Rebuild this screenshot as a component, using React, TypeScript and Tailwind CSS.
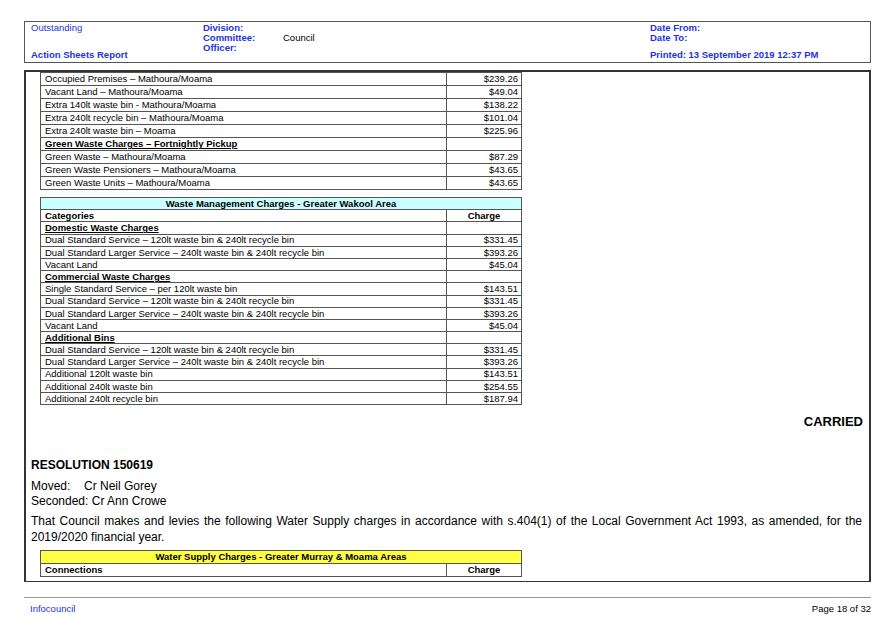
const F = { fontFamily: '"Liberation Sans Narrow","Liberation Sans",Arial,sans-serif' };

const t1: [string, string, boolean?][] = [
  ["Occupied Premises – Mathoura/Moama", "$239.26"],
  ["Vacant Land – Mathoura/Moama", "$49.04"],
  ["Extra 140lt waste bin - Mathoura/Moama", "$138.22"],
  ["Extra 240lt recycle bin – Mathoura/Moama", "$101.04"],
  ["Extra 240lt waste bin – Moama", "$225.96"],
  ["Green Waste Charges – Fortnightly Pickup", "", true],
  ["Green Waste – Mathoura/Moama", "$87.29"],
  ["Green Waste Pensioners – Mathoura/Moama", "$43.65"],
  ["Green Waste Units – Mathoura/Moama", "$43.65"],
];
const t2: [string, string, boolean?][] = [
  ["Domestic Waste Charges", "", true],
  ["Dual Standard Service – 120lt waste bin & 240lt recycle bin", "$331.45"],
  ["Dual Standard Larger Service – 240lt waste bin & 240lt recycle bin", "$393.26"],
  ["Vacant Land", "$45.04"],
  ["Commercial Waste Charges", "", true],
  ["Single Standard Service – per 120lt waste bin", "$143.51"],
  ["Dual Standard Service – 120lt waste bin & 240lt recycle bin", "$331.45"],
  ["Dual Standard Larger Service – 240lt waste bin & 240lt recycle bin", "$393.26"],
  ["Vacant Land", "$45.04"],
  ["Additional Bins", "", true],
  ["Dual Standard Service – 120lt waste bin & 240lt recycle bin", "$331.45"],
  ["Dual Standard Larger Service – 240lt waste bin & 240lt recycle bin", "$393.26"],
  ["Additional 120lt waste bin", "$143.51"],
  ["Additional 240lt waste bin", "$254.55"],
  ["Additional 240lt recycle bin", "$187.94"],
];

function Row({ r, h }: { r: [string, string, boolean?]; h: string }) {
  return (
    <tr className={h}>
      <td className={`border border-[#555] px-[4px] leading-none ${r[2] ? "font-bold underline" : ""}`}>{r[0]}</td>
      <td className="border border-[#555] px-[3px] text-right leading-none">{r[1]}</td>
    </tr>
  );
}

export default function App() {
  return (
    <div className="w-[893px] h-[626px] bg-white relative text-black overflow-hidden" style={F}>
      <div className="pt-[21px] pl-[24px] w-[871px]">
        <div className="border border-[#555] h-[42px] flex text-[9.5px] text-[#2233dd] px-[6px] pt-[1px] leading-[10px]">
          <div className="w-[172px] flex flex-col justify-between pb-[2px]">
            <div>Outstanding</div>
            <div className="font-bold">Action Sheets Report</div>
          </div>
          <div className="w-[447px] font-bold">
            <div>Division:</div>
            <div className="flex"><span className="w-[80px]">Committee:</span><span className="font-normal text-black">Council</span></div>
            <div>Officer:</div>
          </div>
          <div className="flex flex-col justify-between pb-[2px] font-bold">
            <div>
              <div>Date From:</div>
              <div>Date To:</div>
            </div>
            <div>Printed: <span>13 September 2019 12:37 PM</span></div>
          </div>
        </div>
        <div className="mt-[7px] border border-[#333] border-t-2 border-x-2 h-[512px] overflow-hidden relative">
          <div className="pl-[14px] text-[9.5px]">
            <table className="border-collapse w-[482px] table-fixed">
              <colgroup><col className="w-[406px]" /><col /></colgroup>
              <tbody>{t1.map((r, i) => <Row key={i} r={r} h="h-[13px]" />)}</tbody>
            </table>
            <table className="border-collapse w-[482px] table-fixed mt-[7px]">
              <colgroup><col className="w-[406px]" /><col /></colgroup>
              <tbody>
                <tr className="h-[12.2px]">
                  <td colSpan={2} className="border border-[#555] bg-[#ccffff] text-center font-bold leading-none">Waste Management Charges - Greater Wakool Area</td>
                </tr>
                <tr className="h-[12.2px] font-bold">
                  <td className="border border-[#555] px-[4px] leading-none">Categories</td>
                  <td className="border border-[#555] text-center leading-none">Charge</td>
                </tr>
                {t2.map((r, i) => <Row key={i} r={r} h="h-[12.2px]" />)}
              </tbody>
            </table>
          </div>
          <div className="text-right font-bold text-[13px] pr-[6px] mt-[7px]" style={{ fontFamily: '"Liberation Sans",Arial,sans-serif' }}>CARRIED</div>
          <div className="px-[5px] text-[12px]" style={{ fontFamily: '"Liberation Sans",Arial,sans-serif' }}>
            <div className="font-bold mt-[26px] leading-[14px]">RESOLUTION 150619</div>
            <div className="mt-[7px] leading-[15px]"><span className="inline-block w-[53px]">Moved:</span>Cr Neil Gorey</div>
            <div className="leading-[15px]">Seconded: Cr Ann Crowe</div>
            <p className="mt-[4px] leading-[16px] text-justify pr-[2px]">That Council makes and levies the following Water Supply charges in accordance with s.404(1) of the Local Government Act 1993, as amended, for the 2019/2020 financial year.</p>
          </div>
          <div className="pl-[14px] text-[9.5px] mt-[5px]">
            <table className="border-collapse w-[482px] table-fixed">
              <colgroup><col className="w-[406px]" /><col /></colgroup>
              <tbody>
                <tr className="h-[13px]"><td colSpan={2} className="border border-[#555] bg-[#ffff44] text-center font-bold leading-none">Water Supply Charges - Greater Murray &amp; Moama Areas</td></tr>
                <tr className="h-[13px] font-bold">
                  <td className="border border-[#555] px-[4px] leading-none">Connections</td>
                  <td className="border border-[#555] text-center leading-none">Charge</td>
                </tr>
              </tbody>
            </table>
          </div>
        </div>
        <div className="mt-[15px] border-t border-[#999] flex justify-between pt-[4px] text-[9.5px]">
          <span className="text-[#2233dd] pl-[6px]">Infocouncil</span>
          <span>Page 18 of 32</span>
        </div>
      </div>
    </div>
  );
}
